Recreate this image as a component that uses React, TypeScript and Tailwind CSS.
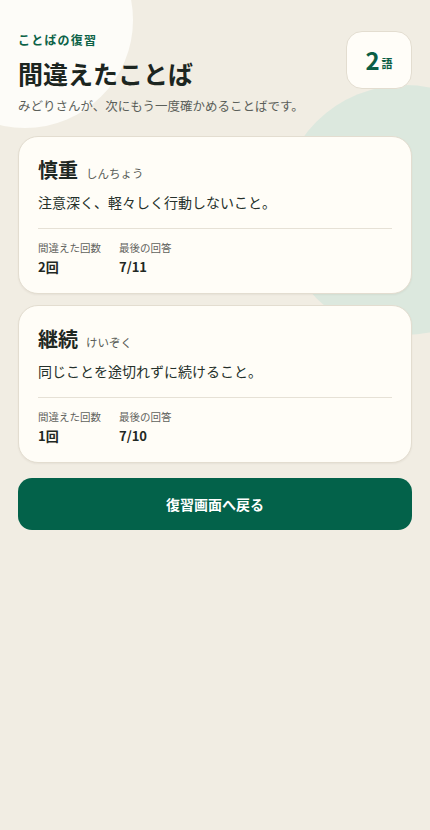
import React from "react";

type Word = {
  kanji: string;
  reading: string;
  meaning: string;
  misses: number;
  last: string;
};

const words: Word[] = [
  { kanji: "慎重", reading: "しんちょう", meaning: "注意深く、軽々しく行動しないこと。", misses: 2, last: "7/11" },
  { kanji: "継続", reading: "けいぞく", meaning: "同じことを途切れずに続けること。", misses: 1, last: "7/10" },
];

const WordCard = ({ word }: { word: Word }) => (
  <div className="rounded-[20px] border border-[#e3ddd0] bg-[#fffdf7] px-[19px] pt-[19px] pb-[16px] shadow-[0_1px_2px_rgba(60,50,30,0.06)]">
    <div className="flex items-baseline gap-[8px]">
      <span className="text-[20px] leading-[28px] font-bold text-[#1f2823]">{word.kanji}</span>
      <span className="text-[11.5px] leading-[16px] text-[#5a5d58]">{word.reading}</span>
    </div>
    <p className="mt-[6px] text-[14px] leading-[24px] text-[#25302a]">{word.meaning}</p>
    <div className="mt-[14px] border-t border-[#e6e1d6] pt-[11px] flex gap-[18px]">
      <div>
        <p className="text-[10.5px] leading-[16px] text-[#5f625d]">間違えた回数</p>
        <p className="mt-[1px] text-[13px] leading-[20px] font-bold text-[#1f2823]">{word.misses}回</p>
      </div>
      <div>
        <p className="text-[10.5px] leading-[16px] text-[#5f625d]">最後の回答</p>
        <p className="mt-[1px] text-[13px] leading-[20px] font-bold text-[#1f2823]">{word.last}</p>
      </div>
    </div>
  </div>
);

export default function App() {
  return (
    <div
      className="relative min-h-[830px] w-full overflow-hidden bg-[#f1ede3]"
      style={{ fontFamily: '"Noto Sans CJK JP", "Noto Sans", sans-serif' }}
    >
      <div className="absolute left-[-83px] top-[-88px] h-[216px] w-[216px] rounded-full bg-[#fdfcf8]" />
      <div className="absolute left-[280px] top-[85px] h-[250px] w-[250px] rounded-full bg-[#dce8de]" />

      <div className="relative px-[18px] pt-[30px]">
        <div className="flex items-start justify-between">
          <div>
            <p className="text-[12px] leading-[20px] font-bold tracking-[0.1em] text-[#0b6247]">ことばの復習</p>
            <h1 className="mt-[6px] text-[25px] leading-[34px] font-bold text-[#1c2520]">間違えたことば</h1>
          </div>
          <div className="mt-[1px] flex h-[58px] w-[66px] items-center justify-center rounded-[16px] border border-[#e3ddd0] bg-[#fffdf8]">
            <span className="text-[24px] font-bold leading-none text-[#0b5e45]">2</span>
            <span className="ml-[2px] mt-[6px] text-[11px] font-bold leading-none text-[#0b5e45]">語</span>
          </div>
        </div>
        <p className="mt-[6px] text-[12.5px] leading-[20px] text-[#5b5f5a]">みどりさんが、次にもう一度確かめることばです。</p>

        <div className="mt-5 flex flex-col gap-[11px]">
          {words.map((w) => (
            <WordCard key={w.kanji} word={w} />
          ))}
        </div>

        <button className="mt-[15px] flex h-[52px] w-full items-center justify-center rounded-[14px] bg-[#03624a] text-[14px] font-bold text-white">
          復習画面へ戻る
        </button>
      </div>
    </div>
  );
}
